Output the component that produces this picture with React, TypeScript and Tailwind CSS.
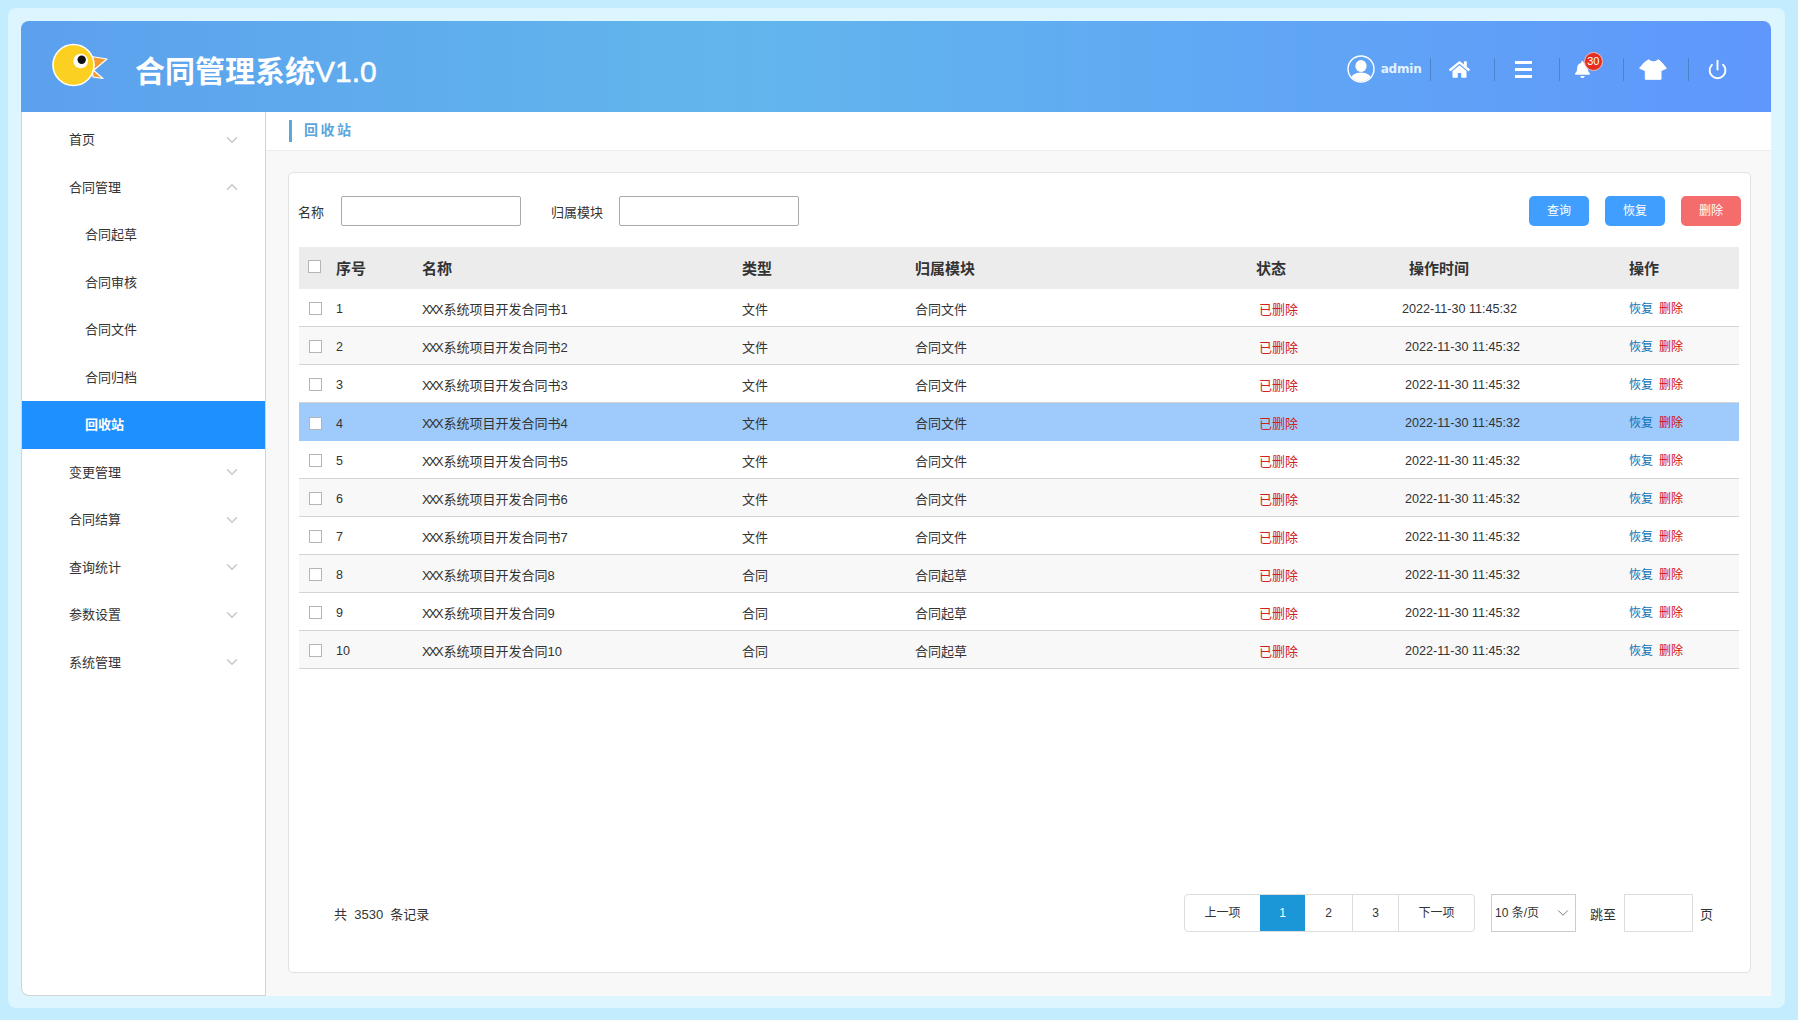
import { ChevronDown, ChevronUp, Power } from "lucide-react";
import { FaBell, FaHome } from "react-icons/fa";

const menu = [
  { label: "首页", icon: "down" },
  { label: "合同管理", icon: "up" },
  { label: "合同起草", child: true },
  { label: "合同审核", child: true },
  { label: "合同文件", child: true },
  { label: "合同归档", child: true },
  { label: "回收站", child: true, active: true },
  { label: "变更管理", icon: "down" },
  { label: "合同结算", icon: "down" },
  { label: "查询统计", icon: "down" },
  { label: "参数设置", icon: "down" },
  { label: "系统管理", icon: "down" },
];

const rows = [
  { id: 1, name: "系统项目开发合同书1", type: "文件", module: "合同文件" },
  { id: 2, name: "系统项目开发合同书2", type: "文件", module: "合同文件" },
  { id: 3, name: "系统项目开发合同书3", type: "文件", module: "合同文件" },
  { id: 4, name: "系统项目开发合同书4", type: "文件", module: "合同文件" },
  { id: 5, name: "系统项目开发合同书5", type: "文件", module: "合同文件" },
  { id: 6, name: "系统项目开发合同书6", type: "文件", module: "合同文件" },
  { id: 7, name: "系统项目开发合同书7", type: "文件", module: "合同文件" },
  { id: 8, name: "系统项目开发合同8", type: "合同", module: "合同起草" },
  { id: 9, name: "系统项目开发合同9", type: "合同", module: "合同起草" },
  { id: 10, name: "系统项目开发合同10", type: "合同", module: "合同起草" },
];

const gridCols = "grid grid-cols-[37px_86px_320px_173px_341px_149px_224px_110px] items-center";

function Logo() {
  return (
    <svg width="90" height="60" viewBox="0 0 90 60" className="-mt-[3px] shrink-0">
      <path d="M51.5 21.5 L67 24 L54 35 Z" fill="#f59a2f" stroke="#fff" strokeWidth="1.2" strokeLinejoin="round" />
      <path d="M52 34 L63 43.5 L53 42 Z" fill="#f59a2f" stroke="#fff" strokeWidth="1.2" strokeLinejoin="round" />
      <circle cx="33.5" cy="30" r="20.5" fill="#fbd020" stroke="#fff" strokeWidth="1.6" />
      <circle cx="40.7" cy="26" r="7.3" fill="#fff" />
      <circle cx="41.7" cy="24.7" r="4.2" fill="#111" />
    </svg>
  );
}

function Avatar() {
  return (
    <svg width="28" height="28" viewBox="0 0 28 28" className="shrink-0">
      <defs>
        <clipPath id="avatar-clip">
          <circle cx="14" cy="14" r="12.5" />
        </clipPath>
      </defs>
      <circle cx="14" cy="14" r="13" fill="none" stroke="#fff" strokeWidth="1.4" />
      <g clipPath="url(#avatar-clip)" fill="#fff">
        <ellipse cx="14" cy="11" rx="5.6" ry="6" />
        <ellipse cx="14" cy="25" rx="11" ry="7.5" />
      </g>
    </svg>
  );
}

function Shirt() {
  return (
    <svg width="28" height="21" viewBox="0 0 28 21">
      <path
        d="M0.6 9.3 L5 4 L9.5 0.7 Q14.5 5 19.5 0.7 L23 4 L27.4 9.3 L22 11.7 L22 20.3 L6.3 20.3 L6.3 11.7 Z"
        fill="#fff"
        stroke="#fff"
        strokeLinejoin="round"
      />
    </svg>
  );
}

function HeaderCell({ children }: { children: React.ReactNode }) {
  return (
    <div className="flex h-[23px] w-[64.5px] items-center justify-center border-l border-[#4a85c9] pr-[6px]">
      {children}
    </div>
  );
}

function Header() {
  return (
    <header className="flex h-[91px] shrink-0 items-center rounded-t-lg bg-gradient-to-r from-[#5ca0ee] via-[#62b6ec] via-40% to-[#5f97fc] pl-[19px] pr-[19px]">
      <Logo />
      <h1 className="ml-[5px] mt-[10px] whitespace-nowrap text-[30px] font-bold leading-none text-white">
        合同管理系统<span className="font-normal [-webkit-text-stroke:0.5px_white]">V1.0</span>
      </h1>
      <div className="ml-auto flex items-center pt-[5px]">
        <Avatar />
        <span className="ml-[6px] mr-[8px] font-['DejaVu_Sans'] text-[12px] font-bold tracking-[-0.2px] text-[#e4f1ff]">admin</span>
        <HeaderCell>
          <FaHome size={21} color="#fff" />
        </HeaderCell>
        <HeaderCell>
          <div className="flex w-[17px] flex-col gap-[4px]">
            <div className="h-[3px] bg-white" />
            <div className="h-[3px] bg-white" />
            <div className="h-[3px] bg-white" />
          </div>
        </HeaderCell>
        <HeaderCell>
          <div className="relative -ml-[12px]">
            <FaBell size={17} color="#fff" />
            <span className="absolute -right-[12px] -top-[9px] flex h-[19px] w-[19px] items-center justify-center rounded-full border border-[#f3b5ae] bg-[#e6301f] text-[11px] leading-none text-white">
              30
            </span>
          </div>
        </HeaderCell>
        <HeaderCell>
          <Shirt />
        </HeaderCell>
        <HeaderCell>
          <Power size={21} color="#fff" strokeWidth={2.2} />
        </HeaderCell>
      </div>
    </header>
  );
}

function Sidebar() {
  return (
    <aside className="flex w-[245px] shrink-0 flex-col rounded-bl-lg border-x border-b border-[#cfd4d6] bg-white pt-[4px]">
      {menu.map((item) => (
        <div
          key={item.label}
          className={
            "flex h-[47.5px] items-center text-[13px] " +
            (item.child ? "pl-[63px] " : "pl-[47px] ") +
            (item.active ? "bg-[#1e90ff] font-bold text-white" : "text-[#333]")
          }
        >
          {item.label}
          {item.icon === "down" && <ChevronDown size={18} color="#c8c8c8" className="ml-auto mr-[24px]" />}
          {item.icon === "up" && <ChevronUp size={18} color="#c8c8c8" className="ml-auto mr-[24px]" />}
        </div>
      ))}
    </aside>
  );
}

function Checkbox({ className = "" }: { className?: string }) {
  return <input type="checkbox" className={"h-[13px] w-[13px] appearance-none border border-[#b5b5b5] bg-white " + className} />;
}

function FileName({ name }: { name: string }) {
  return (
    <span className="whitespace-nowrap">
      <span className="tracking-[-2.2px]">XXX</span>
      <span className="ml-[2px]">{name}</span>
    </span>
  );
}

function SearchBar() {
  return (
    <div className="flex h-[30px] items-center text-[13px] text-[#333]">
      <span className="-ml-px mt-[3px] w-[43px]">名称</span>
      <input className="h-[30px] w-[180px] rounded-[2px] border border-[#aaa] bg-white" />
      <span className="ml-[30px] mt-[3px] w-[68px] whitespace-nowrap">归属模块</span>
      <input className="h-[30px] w-[180px] rounded-[2px] border border-[#aaa] bg-white" />
      <button className="ml-auto h-[30px] w-[60px] rounded-[5px] bg-[#409eff] text-[12px] text-white">查询</button>
      <button className="ml-[16px] h-[30px] w-[60px] rounded-[5px] bg-[#409eff] text-[12px] text-white">恢复</button>
      <button className="ml-[16px] h-[30px] w-[60px] rounded-[5px] bg-[#f56c6c] text-[12px] text-white">删除</button>
    </div>
  );
}

function RecordTable() {
  return (
    <div className="mr-[2px] mt-[21px]">
      <div className={gridCols + " h-[42px] bg-[#ececec] text-[15px] font-bold text-[#333]"}>
        <Checkbox className="-mt-[4px] ml-[9px]" />
        <span className="pt-[2px]">序号</span>
        <span className="pt-[2px]">名称</span>
        <span className="pt-[2px]">类型</span>
        <span className="pt-[2px]">归属模块</span>
        <span className="pt-[2px]">状态</span>
        <span className="ml-[4px] pt-[2px]">操作时间</span>
        <span className="pt-[2px]">操作</span>
      </div>
      {rows.map((row) => (
        <div
          key={row.id}
          className={
            gridCols +
            " h-[38px] text-[13px] text-[#333] " +
            (row.id === 4 ? "bg-[#9ecbfb]" : "border-b border-[#d4d4d4] " + (row.id % 2 === 0 ? "bg-[#f8f8f8]" : "bg-white"))
          }
        >
          <Checkbox className="ml-[10px] mt-[2px]" />
          <span className="pt-[4px] text-[12.5px]">{row.id}</span>
          <span className="pt-[4px]">
            <FileName name={row.name} />
          </span>
          <span className="pt-[4px]">{row.type}</span>
          <span className="pt-[4px]">{row.module}</span>
          <span className="ml-[3px] pt-[4px] text-[#d3211c]">已删除</span>
          <span className={"pt-[3px] text-[12.6px] " + (row.id === 1 ? "-ml-[3px]" : "")}>2022-11-30 11:45:32</span>
          <span className="flex gap-[6px] pt-[2px] text-[12px]">
            <a className="text-[#0f72b4]">恢复</a>
            <a className="text-[#d40f0a]">删除</a>
          </span>
        </div>
      ))}
    </div>
  );
}

function Pager() {
  const cell = "flex h-full items-center justify-center border-l border-[#ddd] text-[12px] text-[#333]";
  return (
    <div className="mb-[40px] ml-[35px] mr-[28px] mt-auto flex h-[38px] items-center text-[13px] text-[#333]">
      <span className="mt-[3px] whitespace-pre">共  3530  条记录</span>
      <div className="ml-auto flex h-full overflow-hidden rounded-[4px] border border-[#ddd]">
        <a className="flex h-full w-[75px] items-center justify-center text-[12px] text-[#333]">上一项</a>
        <a className="flex h-full w-[45px] items-center justify-center bg-[#1b96d6] text-[12px] text-white">1</a>
        <a className={cell + " w-[47px] border-l-0"}>2</a>
        <a className={cell + " w-[46px]"}>3</a>
        <a className={cell + " w-[76px]"}>下一项</a>
      </div>
      <div className="ml-[16px] flex h-full w-[85px] items-center border border-[#ccc] pl-[3px] pr-[3px] text-[12px]">
        10 条/页
        <ChevronDown size={18} color="#777" strokeWidth={1.3} className="ml-auto" />
      </div>
      <span className="ml-[14px] mt-[3px] whitespace-nowrap">跳至</span>
      <input className="ml-[8px] h-full w-[69px] border border-[#ddd] bg-white" />
      <span className="ml-[7px] mt-[3px]">页</span>
    </div>
  );
}

export default function App() {
  return (
    <div
      className="h-[1020px] w-[1798px] overflow-hidden bg-[#c3ecfe] pb-3 pl-2 pr-[13px] pt-2 text-[#333]"
      style={{ fontFamily: '"Liberation Sans", "Noto Sans CJK SC", sans-serif' }}
    >
      <div className="flex h-full flex-col rounded-lg bg-[#dcf5fe] pb-[12px] pl-[13px] pr-[14px] pt-[13px]">
        <Header />
        <div className="flex min-h-0 flex-1">
          <Sidebar />
          <main className="flex min-w-0 flex-1 flex-col bg-[#f8f8f8]">
            <div className="flex h-[39px] shrink-0 items-center border-b border-[#eee] bg-white pl-[23px]">
              <div className="h-[22px] w-[3px] bg-[#5ba6dc]" />
              <span className="mb-[2px] ml-[12px] text-[14px] font-bold tracking-[2.5px] text-[#5ba6dc]">回收站</span>
            </div>
            <section className="mb-[23px] ml-[22px] mr-[20px] mt-[21px] flex flex-1 flex-col rounded-[5px] border border-[#e2e2e2] bg-white pl-[10px] pr-[9px] pt-[23px]">
              <SearchBar />
              <RecordTable />
              <Pager />
            </section>
          </main>
        </div>
      </div>
    </div>
  );
}
